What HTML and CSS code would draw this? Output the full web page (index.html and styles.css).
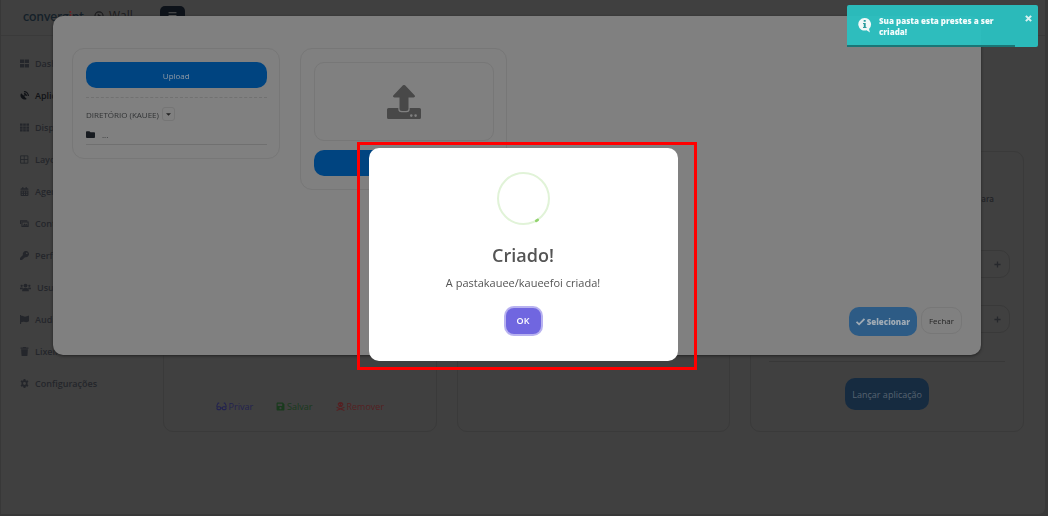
FILE: index.html
```html
<!DOCTYPE html>
<html lang="pt-BR">
<head>
<meta charset="utf-8">
<meta name="viewport" content="width=device-width, initial-scale=1">
<title>Convergint Wall</title>
<link rel="stylesheet" href="styles.css">
</head>
<body>
<div class="page">
  <header class="topbar">
    <a class="brand" href="#">converg<span class="brand-i">i</span>nt</a>
    <span class="product">
      <svg class="icon play" viewBox="0 0 16 16"><circle cx="8" cy="8" r="6.5" fill="none" stroke="currentColor" stroke-width="2"/><path d="M6 4.5l6 3.5-6 3.5z"/></svg>
      Wall
    </span>
    <button class="menu-btn" type="button" aria-label="Menu"><svg class="icon" viewBox="0 0 16 16"><path d="M1 2h14v2H1zM1 7h14v2H1zM1 12h14v2H1z"/></svg></button>
    <span class="avatar"></span>
  </header>
  <div class="columns">
    <nav class="sidebar">
      <a href="#"><svg class="icon" viewBox="0 0 16 16"><path d="M0 1h7.4v6.3H0zM8.6 1H16v6.3H8.6zM0 8.7h7.4V15H0zM8.6 8.7H16V15H8.6z"/></svg>Dashboard</a>
      <a class="active" href="#"><svg class="icon" viewBox="0 0 16 16"><path d="M2 4a7.300 7.300 0 0 0 10 10L7.800 9.800 9 8.500 7.500 7 6.200 8.200zM7 0v2.200A6.800 6.800 0 0 1 13.800 9H16A9 9 0 0 0 7 0zM7 3.700V6a3 3 0 0 1 3 3h2.300A5.300 5.300 0 0 0 7 3.700z"/></svg>Aplicações</a>
      <a href="#"><svg class="icon" viewBox="0 0 16 16"><path d="M0 1h4.600v4H0zM5.700 1h4.600v4H5.700zM11.400 1H16v4h-4.600zM0 6h4.600v4H0zM5.700 6h4.600v4H5.700zM11.400 6H16v4h-4.600zM0 11h4.600v4H0zM5.700 11h4.600v4H5.700zM11.400 11H16v4h-4.600z"/></svg>Dispositivos</a>
      <a href="#"><svg class="icon" viewBox="0 0 16 16"><path d="M1 1.500h13v13H1zM7.500 1.500v13M1 8h13" fill="none" stroke="currentColor" stroke-width="1.500"/></svg>Layouts</a>
      <a href="#"><svg class="icon" viewBox="0 0 16 16"><path d="M1 4a2 2 0 0 1 2-2h1V0h2v2h4V0h2v2h1a2 2 0 0 1 2 2v1H1zM1 6h14v8a2 2 0 0 1-2 2H3a2 2 0 0 1-2-2zm2 2v2h2V8zm4 0v2h2V8zm4 0v2h2V8zM3 12v2h2v-2zm4 0v2h2v-2zm4 0v2h2v-2z" fill-rule="evenodd"/></svg>Agendamentos</a>
      <a href="#"><svg class="icon" viewBox="0 0 16 16"><path d="M1 9V3h12M3.500 5.500h11v8h-11z" fill="none" stroke="currentColor" stroke-width="1.800"/><path d="M5 12l3-4 2 2 1.500-1.500L14 12z"/></svg>Conteúdos</a>
      <a href="#"><svg class="icon" viewBox="0 0 16 16"><path d="M16 5.500A5.500 5.500 0 0 1 9.400 10.900L8.200 12H6.500v2h-2v2H0v-3.500l5.300-5.300A5.500 5.500 0 1 1 16 5.500zM12 2.500a1.500 1.500 0 1 0 0 3 1.500 1.500 0 0 0 0-3z" fill-rule="evenodd"/></svg>Perfis</a>
      <a href="#"><svg class="icon wide" viewBox="0 0 20 16"><circle cx="3" cy="5" r="2"/><circle cx="17" cy="5" r="2"/><circle cx="10" cy="4.500" r="3.500"/><path d="M0 11V9.500A1.500 1.500 0 0 1 1.500 8H4l1.500 1L4 11zM20 11V9.500A1.500 1.500 0 0 0 18.500 8H16l-1.500 1 1.500 2zM4 15v-2.500A4 4 0 0 1 8 9h4a4 4 0 0 1 4 3.500V15z"/></svg>Usuários</a>
      <a href="#"><svg class="icon" viewBox="0 0 16 16"><path d="M0 0h2v2c3-1.500 4 1 7 1 2 0 4-1 7-2v10c-3 1.500-5 2-7 1.500-3-.7-4-1-7 .5v3H0z"/></svg>Auditoria</a>
      <a href="#"><svg class="icon" viewBox="0 0 16 16"><path d="M1 1h4l1-1h4l1 1h4v2H1zM2 4h12l-.7 10.500a1.500 1.500 0 0 1-1.500 1.500H4.200a1.500 1.500 0 0 1-1.500-1.500z"/></svg>Lixeira</a>
      <a href="#"><svg class="icon" viewBox="0 0 16 16"><path d="M6.500 0h3l.4 2.200 1.500.8 2.100-.8L15 4.800l-1.700 1.500v3.400l1.700 1.500-1.500 2.600-2.100-.8-1.500.8-.4 2.200h-3l-.4-2.200-1.500-.8-2.100.8L1 11.200l1.700-1.500V6.300L1 4.800l1.500-2.600 2.100.8 1.500-.8zM8 5.400a2.600 2.600 0 1 0 0 5.200 2.600 2.600 0 0 0 0-5.200z" fill-rule="evenodd"/></svg>Configurações</a>
    </nav>
    <main class="cards">
      <section class="card">
        <div class="card-actions">
          <a class="private" href="#"><svg class="icon" viewBox="0 0 18 16"><path d="M1 9V6l2-4h2M17 9V6l-2-4h-2M8 10.500h2" fill="none" stroke="currentColor" stroke-width="1.800"/><rect x="1" y="8.500" width="6.500" height="5" rx="2" fill="none" stroke="currentColor" stroke-width="2"/><rect x="10.500" y="8.500" width="6.500" height="5" rx="2" fill="none" stroke="currentColor" stroke-width="2"/></svg>Privar</a>
          <a class="save" href="#"><svg class="icon" viewBox="0 0 16 16"><path d="M2 1h10l3 3v9.500a1.500 1.500 0 0 1-1.500 1.500h-11A1.500 1.500 0 0 1 1 13.500V2zM3 3v4h8V3zM8 9a2 2 0 1 0 0 4 2 2 0 0 0 0-4z" fill-rule="evenodd"/></svg>Salvar</a>
          <a class="remove" href="#"><svg class="icon" viewBox="0 0 16 16"><path d="M8 0C5 0 3 1.800 3 4c0 1.400.8 2.400 2 3v2h6V7c1.200-.6 2-1.600 2-3 0-2.200-2-4-5-4zM6 3.500a1 1 0 1 1 0 2 1 1 0 0 1 0-2zm4 0a1 1 0 1 1 0 2 1 1 0 0 1 0-2z" fill-rule="evenodd"/><path d="M1 9.500l14 5.500M15 9.500L1 15" fill="none" stroke="currentColor" stroke-width="2"/></svg>Remover</a>
        </div>
      </section>
      <section class="card"></section>
      <section class="card launch">
        <p class="hint">para</p>
        <button class="accordion" type="button" aria-label="Expandir"><svg class="icon" viewBox="0 0 16 16"><path d="M6.500 1h3v5.500H15v3H9.500V15h-3V9.500H1v-3h5.500z"/></svg></button>
        <button class="accordion" type="button" aria-label="Expandir"><svg class="icon" viewBox="0 0 16 16"><path d="M6.500 1h3v5.500H15v3H9.500V15h-3V9.500H1v-3h5.500z"/></svg></button>
        <hr>
        <button class="launch-btn" type="button">Lançar aplicação</button>
      </section>
    </main>
  </div>
</div>

<div class="layer modal-layer">
  <section class="modal">
    <div class="modal-body">
      <div class="panel">
        <button class="blue-btn" type="button">Upload</button>
        <hr class="dashed">
        <div class="directory">DIRETÓRIO (KAUEE)
          <button class="caret" type="button" aria-label="Opções"><svg viewBox="0 0 8 4"><path d="M0 0h8L4 4z"/></svg></button>
        </div>
        <a class="folder" href="#"><svg class="icon" viewBox="0 0 16 16"><path d="M0 3.500A1.500 1.500 0 0 1 1.500 2H6l2 2h6.500A1.500 1.500 0 0 1 16 5.500v7a1.500 1.500 0 0 1-1.500 1.500h-13A1.500 1.500 0 0 1 0 12.500z"/></svg>...</a>
      </div>
      <div class="panel">
        <div class="dropzone"><svg viewBox="0 0 34 34"><path d="M15.700.6a1.800 1.800 0 0 1 2.600 0l9.200 9.700c1 1 .3 2.200-1 2.200h-5v11a2.500 2.500 0 0 1-2.500 2.500h-4a2.500 2.500 0 0 1-2.500-2.500v-11h-5c-1.300 0-2-1.200-1-2.200z"/><path d="M1.500 23h9.800v1A3.200 3.200 0 0 0 14.500 27.200h5A3.200 3.200 0 0 0 22.700 24v-1h9.800A1.500 1.500 0 0 1 34 24.500v8a1.500 1.500 0 0 1-1.500 1.500h-31A1.500 1.500 0 0 1 0 32.500v-8A1.500 1.500 0 0 1 1.500 23zM24.300 29.300a1.300 1.300 0 1 0 0 2.600 1.300 1.300 0 0 0 0-2.600zm4.300 0a1.300 1.300 0 1 0 0 2.600 1.300 1.300 0 0 0 0-2.600z" fill-rule="evenodd"/></svg></div>
        <button class="blue-btn" type="button" aria-label="Upload"></button>
      </div>
    </div>
    <footer class="modal-footer">
      <button class="select-btn" type="button"><svg class="icon" viewBox="0 0 16 16"><path d="M1 8.500l4.500 4.500L15 3.500" fill="none" stroke="currentColor" stroke-width="3.200"/></svg>Selecionar</button>
      <button class="close-btn" type="button">Fechar</button>
    </footer>
  </section>
</div>

<div class="layer dialog-layer">
  <section class="dialog" role="dialog" aria-labelledby="dialog-title">
    <svg class="success" viewBox="0 0 52 52"><circle cx="26" cy="26" r="25" fill="none" stroke="#e1f3d8" stroke-width="2"/><path d="M38.500 48l1.500-1" stroke="#92d36e" stroke-width="2.500" stroke-linecap="round"/></svg>
    <h2 id="dialog-title">Criado!</h2>
    <p>A pastakauee/kaueefoi criada!</p>
    <button class="ok" type="button">OK</button>
  </section>
</div>

<aside class="toast" role="status">
  <svg class="toast-icon" viewBox="0 0 14 16"><path d="M6.500 1a6.300 6.300 0 1 0 2 12.300L12 15.500l-1-3.600A6.300 6.300 0 0 0 6.500 1z" fill="#f1f8f8"/><path d="M5.700 3h2v1.800h-2zM5 6h2.700v4h.8v1H5v-1h.8V7H5z" fill="#2b9c9d"/></svg>
  <strong>Sua pasta esta prestes a ser criada!</strong>
  <button class="toast-close" type="button" aria-label="Fechar aviso"><svg viewBox="0 0 8 8"><path d="M1 1l6 6M7 1L1 7" stroke="currentColor" stroke-width="2.400"/></svg></button>
  <span class="toast-progress"></span>
</aside>
</body>
</html>
```
FILE: styles.css
```css
* { box-sizing: border-box; }
body {
  margin: 0;
  background: #383838;
  font-family: "Open Sans", "Noto Sans", sans-serif;
  font-size: 9px;
  overflow: hidden;
}
button { font: inherit; padding: 0; border: 0; cursor: pointer; }
a { color: inherit; text-decoration: none; }
p, h2 { margin: 0; }
.icon { width: 9px; height: 9px; fill: currentColor; flex: none; }

.page {
  min-height: calc(100vh - 2px);
  margin: 0 3px 2px 1px;
  background: #404040;
  border-bottom-right-radius: 6px;
}
.topbar {
  display: flex;
  align-items: center;
  height: 36px;
  padding: 0 14px 4px 22px;
  border-bottom: 1px solid #3a3a3a;
}
.brand { font: 600 13px/20px Lato, sans-serif; color: #152029; }
.brand-i { color: #6b1c1c; }
.product { display: flex; align-items: center; gap: 5px; margin-left: 10px; font-size: 12px; color: #1b1b1d; }
.play { width: 10px; height: 10px; }
.menu-btn {
  display: grid;
  place-items: center;
  width: 25px;
  height: 20px;
  margin-left: 27px;
  border-radius: 5px;
  background: #0d1219;
  color: #555;
}
.avatar { width: 22px; height: 22px; margin-left: auto; border-radius: 50%; background: #303030; }
.columns { display: flex; }
.sidebar { display: flex; flex-direction: column; width: 142px; padding: 11px 0 0 19px; color: #24262b; }
.sidebar a { display: flex; align-items: center; gap: 6px; height: 32px; font-weight: 600; }
.sidebar .active { color: #101216; }
.icon.wide { width: 11px; }
.cards { flex: 1; display: grid; grid-template-columns: repeat(3, 1fr); gap: 20px; padding: 115px 21px 0 20px; }
.card { display: flex; flex-direction: column; min-height: 280px; border: 1px solid #3a3a3a; border-radius: 10px; }
.card-actions { display: flex; justify-content: center; gap: 23px; margin-top: auto; padding: 0 0 18px; }
.card-actions a { display: flex; align-items: center; gap: 2px; line-height: 13px; }
.private { color: #22224f; }
.private .icon { width: 11px; }
.save { color: #193a1d; }
.remove { color: #552022; }
.launch { padding: 40px 13px 21px; }
.hint { padding-right: 16px; text-align: right; font-size: 8px; line-height: 14px; font-weight: 600; color: #202226; }
.accordion {
  display: flex;
  align-items: center;
  justify-content: flex-end;
  height: 28px;
  margin-top: 44px;
  padding-right: 8px;
  border: 1px solid #393939;
  border-radius: 10px;
  background: transparent;
  color: #26282c;
}
.accordion + .accordion { margin-top: 27px; }
.accordion .icon { width: 7px; height: 7px; }
.launch hr { width: calc(100% - 10px); margin: 28px auto 16px; border: 0; border-top: 1px solid #383838; }
.launch-btn { align-self: center; height: 32px; padding: 0 7px; border-radius: 10px; background: #162b40; color: #566370; }

.layer { position: fixed; inset: 0; }
.modal-layer { padding: 16px 67px 0 53px; }
.modal {
  display: flex;
  flex-direction: column;
  min-height: 339px;
  padding: 32px 19px 19px;
  border-radius: 10px;
  background: #808080;
  box-shadow: 0 1px 3px #222;
}
.modal-body { display: grid; grid-template-columns: repeat(4, 1fr); align-items: start; gap: 20px; }
.panel { padding: 13px 12px 13px 13px; border: 1px solid #777; border-radius: 12px; }
.blue-btn { display: block; width: 100%; height: 26px; border-radius: 10px; background: #004480; color: #8f9aa5; font-size: 8px; }
.dashed { margin: 9px 0; border: 0; border-top: 1px dashed #717171; }
.directory { display: flex; align-items: center; gap: 3px; height: 14px; font-size: 8px; color: #303234; }
.caret { display: grid; place-items: center; width: 13px; height: 14px; border: 1px solid #757575; border-radius: 3px; background: transparent; }
.caret svg { width: 5px; height: 3px; fill: #222; }
.folder { display: flex; align-items: center; gap: 7px; height: 24px; padding-top: 4px; border-bottom: 1px solid #707070; color: #303234; font-size: 8px; }
.folder .icon { color: #171b20; }
.dropzone { display: grid; place-items: center; height: 79px; margin-bottom: 9px; border: 1px solid #777; border-radius: 10px; }
.dropzone svg { width: 34px; height: 34px; fill: #484848; }
.modal-footer { display: flex; justify-content: flex-end; align-items: flex-start; gap: 4px; margin-top: auto; }
.select-btn { display: flex; align-items: center; gap: 2px; height: 29px; padding: 0 7px; border-radius: 10px; background: #2d5b85; color: #a0abb5; font-size: 8px; font-weight: 800; }
.close-btn { height: 27px; padding: 0 7px; border: 1px solid #777; border-radius: 10px; background: transparent; color: #242424; font-size: 8px; }

.dialog-layer { display: grid; place-items: center; padding: 0 2px 8px 0; }
.dialog {
  position: relative;
  display: flex;
  flex-direction: column;
  align-items: center;
  width: 309px;
  padding: 24px 20px 27px;
  border-radius: 10px;
  background: #fff;
  color: #545454;
}
.dialog::after { content: ""; position: absolute; inset: -6px -19px -9px -12px; border: 3px solid #f00; pointer-events: none; }
.success { width: 53px; height: 53px; }
.dialog h2 { margin-top: 17px; font-size: 18px; line-height: 26px; font-weight: 600; }
.dialog p { margin-top: 7px; font-size: 11px; line-height: 16px; }
.ok { width: 35px; height: 26px; margin-top: 17px; border-radius: 8px; background: #7066e0; color: #fff; box-shadow: 0 0 0 2px #b8b2f0; font-weight: 600; }

.toast {
  position: fixed;
  top: 5px;
  right: 10px;
  display: flex;
  align-items: flex-start;
  gap: 7px;
  width: 191px;
  padding: 10px 6px 10px 11px;
  border-radius: 2px;
  background: #2bc0c0f5;
  color: #f4fcfc;
}
.toast strong { flex: 1; font-size: 8px; line-height: 11px; font-weight: 800; }
.toast-icon { flex: none; width: 14px; height: 16px; margin-top: 2px; }
.toast-close { background: transparent; color: #d7f2f2; line-height: 0; }
.toast-close svg { width: 7px; height: 7px; }
.toast-progress { position: absolute; left: 0; bottom: 0; width: 88%; height: 2px; background: #1a7676; }
```
